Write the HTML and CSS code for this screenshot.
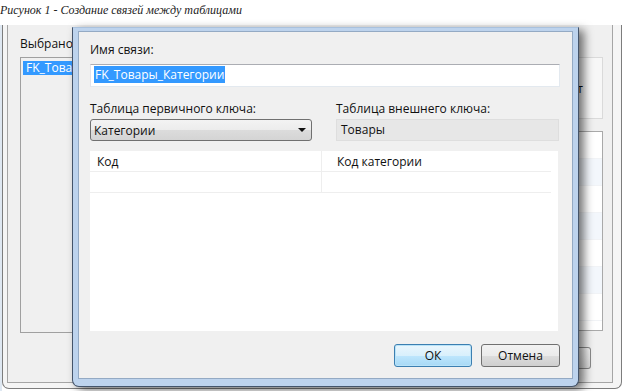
FILE: index.html
```html
<!DOCTYPE html>
<html lang="ru">

<head>
    <meta charset="UTF-8">
    <meta name="viewport" content="width=device-width, initial-scale=1.0">
    <title>Создание связей между таблицами</title>
    <link rel="stylesheet" href="styles.css">
</head>

<body>
    <p class="caption">Рисунок 1 - Создание связей между таблицами</p>

    <div class="desk">
        <!-- окно "Связи по внешнему ключу" на заднем плане -->
        <div class="backwin">
            <div class="backpanel">
                <div class="back-left">
                    <div class="back-label">Выбрано с</div>
                    <div class="listbox">
                        <div class="list-item selected">FK_Товар</div>
                    </div>
                </div>
                <div class="back-right">
                    <div class="back-group">кт</div>
                    <div class="back-grid">
                        <div class="stripe"></div>
                        <div class="stripe alt"></div>
                        <div class="stripe"></div>
                        <div class="stripe alt"></div>
                        <div class="stripe"></div>
                        <div class="stripe alt"></div>
                        <div class="stripe"></div>
                    </div>
                    <div class="back-btn"></div>
                </div>
            </div>
        </div>

        <!-- диалог "Таблицы и столбцы" -->
        <div class="dialog">
            <div class="dialog-body">
                <label class="field-label">Имя связи:</label>
                <div class="textbox"><span class="hl">FK_Товары_Категории</span></div>

                <div class="keys">
                    <div class="key-col">
                        <label class="field-label">Таблица первичного ключа:</label>
                        <div class="combo">
                            <span>Категории</span>
                            <span class="arrow"></span>
                        </div>
                    </div>
                    <div class="key-col right">
                        <label class="field-label">Таблица внешнего ключа:</label>
                        <div class="readonly">Товары</div>
                    </div>
                </div>

                <div class="grid">
                    <div class="grid-row head">
                        <div class="cell">Код</div>
                        <div class="cell second">Код категории</div>
                    </div>
                    <div class="grid-row">
                        <div class="cell"></div>
                        <div class="cell second"></div>
                    </div>
                </div>

                <div class="buttons">
                    <button class="btn default">ОК</button>
                    <button class="btn">Отмена</button>
                </div>
            </div>
        </div>
    </div>
</body>

</html>
```

FILE: styles.css
```css
* {
    box-sizing: border-box;
}

body {
    margin: 0;
    width: 623px;
    height: 391px;
    overflow: hidden;
    background-color: #fff;
    font-family: "Open Sans", "Noto Sans", sans-serif;
    font-size: 12px;
    color: #111;
}

.caption {
    margin: 0;
    height: 25px;
    padding: 2px 0 0 0;
    font-family: "Liberation Serif", serif;
    font-style: italic;
    font-size: 12px;
    line-height: 16px;
    color: #222;
}

.desk {
    position: relative;
    height: 366px;
    background: linear-gradient(to right, #dfe8f2 0, #dfe8f2 2px, transparent 2px);
}

/* задний план */
.backwin {
    position: absolute;
    left: 2px;
    top: 0;
    width: 620px;
    height: 364px;
    border: 1px solid #7d7d7d;
    border-top: none;
    border-radius: 0 0 7px 7px;
    background-color: #f5f5f5;
    padding: 0 8px 5px 4px;
}

.backpanel {
    height: 100%;
    border: 1px solid #a5a5a5;
    border-top: none;
    background-color: #f0f0f0;
    display: flex;
    justify-content: space-between;
}

/* видна только полоска до края диалога */
.back-left {
    width: 64px;
    overflow: hidden;
    padding: 11px 0 0 12px;
}

.back-label {
    line-height: 15px;
    white-space: nowrap;
}

.listbox {
    margin-top: 6px;
    width: 120px;
    height: 276px;
    border: 1px solid #a0a0a0;
    background-color: #f0f0f0;
    padding: 3px 2px;
}

.list-item {
    line-height: 14px;
    padding-left: 3px;
    white-space: nowrap;
}

.selected {
    background-color: #3399ff;
    color: #fff;
}

.back-right {
    width: 34px;
    margin-right: 9px;
    padding-top: 32px;
    display: flex;
    flex-direction: column;
}

.back-group {
    height: 62px;
    margin-left: 2px;
    border: 1px solid #dadada;
    border-left: none;
    background-color: #f7f7f7;
    line-height: 62px;
    white-space: nowrap;
}

.back-grid {
    margin-top: 12px;
    margin-left: 2px;
    height: 200px;
    border: 1px solid #a9a9a9;
    border-left: none;
    background-color: #fff;
}

.stripe {
    height: 27px;
    border-bottom: 1px solid #f1f3f6;
}

.stripe.alt {
    background-color: #f3f7fc;
}

.back-btn {
    margin-top: 16px;
    height: 22px;
    width: 22px;
    border: 1px solid #8a8a8a;
    border-left: none;
    border-radius: 0 3px 3px 0;
    background: linear-gradient(#f2f2f2, #dcdcdc);
}

/* диалог */
.dialog {
    position: absolute;
    left: 72px;
    top: 2px;
    width: 507px;
    height: 360px;
    border: 1px solid #44546a;
    border-top-color: #a9c1dd;
    border-radius: 0 0 7px 7px;
    background-color: #bdd3ed;
    padding: 3px 5px 7px 5px;
    box-shadow: 5px 3px 10px rgba(0, 0, 0, 0.55);
}

.dialog-body {
    height: 100%;
    border: 1px solid #94aac4;
    background-color: #f0f0f0;
    padding: 10px 12px 10px 11px;
    display: flex;
    flex-direction: column;
}

.field-label {
    display: block;
    line-height: 15px;
    white-space: nowrap;
}

.textbox {
    margin-top: 7px;
    height: 23px;
    border: 1px solid #abadb3;
    border-color: #abadb3 #e3e9ef #e3e9ef #e2e3ea;
    background-color: #fff;
    padding: 2px 0 0 3px;
    line-height: 16px;
}

.hl {
    background-color: #3399ff;
    color: #fff;
    padding: 0 1px;
}

.keys {
    margin-top: 14px;
    display: flex;
    gap: 24px;
}

.key-col {
    width: 222px;
}

.key-col.right {
    width: 223px;
}

.combo {
    margin-top: 3px;
    height: 22px;
    border: 1px solid #707070;
    border-radius: 3px;
    background: linear-gradient(#f3f3f3 0%, #ececec 50%, #dcdcdc 51%, #d4d4d4 100%);
    display: flex;
    align-items: center;
    justify-content: space-between;
    padding: 0 5px 0 3px;
}

.arrow {
    width: 0;
    height: 0;
    border-left: 4px solid transparent;
    border-right: 4px solid transparent;
    border-top: 4px solid #111;
}

.readonly {
    margin-top: 3px;
    height: 22px;
    border: 1px solid #dedede;
    background-color: #e7e7e7;
    padding: 2px 0 0 4px;
    line-height: 16px;
}

.grid {
    margin-top: 10px;
    width: 468px;
    height: 180px;
    background-color: #fff;
}

.grid-row {
    display: flex;
    height: 21px;
    width: 461px;
    border-bottom: 1px solid #eeeeee;
}

.cell {
    width: 231px;
    line-height: 21px;
    padding-left: 7px;
}

.cell.second {
    width: 230px;
    border-left: 1px solid #eeeeee;
    padding-left: 15px;
}

.buttons {
    margin-top: 13px;
    display: flex;
    justify-content: flex-end;
    gap: 9px;
}

.btn {
    height: 23px;
    width: 79px;
    border: 1px solid #707070;
    border-radius: 3px;
    background: linear-gradient(#f2f2f2 0%, #ebebeb 50%, #dddddd 51%, #cfcfcf 100%);
    font-family: inherit;
    font-size: 12px;
    color: #111;
    padding: 0;
}

.btn.default {
    width: 78px;
    border-color: #3c7fb1;
    background: linear-gradient(#eaf6fd 0%, #d9f0fc 50%, #bee6fd 51%, #a7d9f5 100%);
    box-shadow: inset 0 0 0 1px #b9e3f8;
}
```
